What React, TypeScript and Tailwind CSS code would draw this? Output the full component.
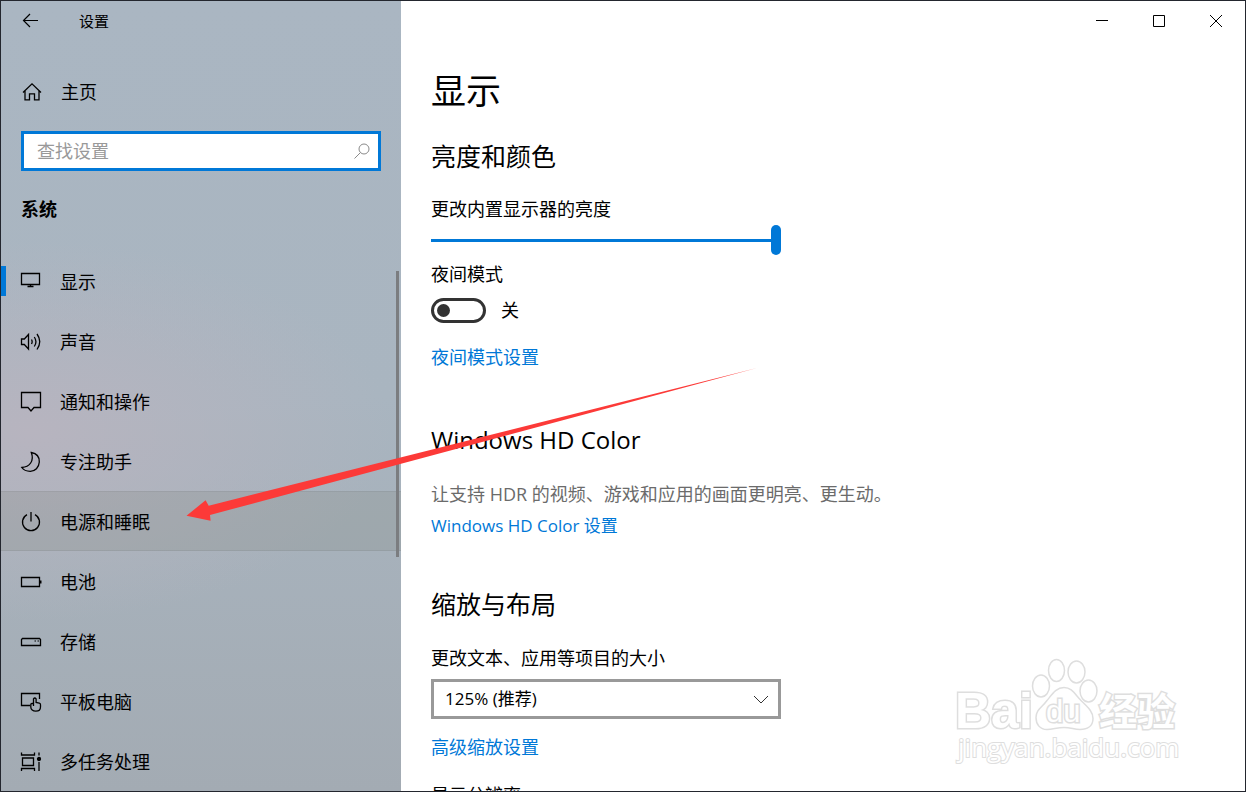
import { useState } from "react"
import type { ReactNode } from "react"
import { clsx } from "clsx"

interface NavItem {
  label: string
  icon: ReactNode
}

interface IconProps {
  children: ReactNode
}

const NavIcon = ({ children }: IconProps) => (
  <svg
    width="22"
    height="22"
    viewBox="0 0 22 22"
    fill="none"
    stroke="currentColor"
    strokeWidth="1.3"
    aria-hidden="true"
    className="shrink-0"
  >
    {children}
  </svg>
)

const NAV_ITEMS: NavItem[] = [
  {
    label: "显示",
    icon: (
      <NavIcon>
        <path d="M1.5 2.5h18v11h-18zM10.5 13.5v2.500M7.500 15.500h6" />
      </NavIcon>
    ),
  },
  {
    label: "声音",
    icon: (
      <NavIcon>
        <path d="M1.5 8h2.8L8.5 3.5v14.500L4.300 13.500H1.500z" />
        <path d="M11.500 8.500q1.300 2.200 0 4.500M14.300 6q3.300 4.800 0 9.500M17 3q5.500 7.500 0 15.500" />
      </NavIcon>
    ),
  },
  {
    label: "通知和操作",
    icon: (
      <NavIcon>
        <path d="M1.500 1.500h19v15H14l-3 3.500-3-3.500H1.500z" />
      </NavIcon>
    ),
  },
  {
    label: "专注助手",
    icon: (
      <NavIcon>
        <path d="M11.300 1.500C17 2.500 19.500 6.500 19.300 11 19 16.500 15 20.300 10.300 20.300 6.800 20.300 3.500 19 1.800 16.500 9.500 16 14.500 10 11.300 1.500z" />
      </NavIcon>
    ),
  },
  {
    label: "电源和睡眠",
    icon: (
      <NavIcon>
        <path d="M11 1v9.500M7 3.600a8.500 8.500 0 1 0 8 0" />
      </NavIcon>
    ),
  },
  {
    label: "电池",
    icon: (
      <NavIcon>
        <path d="M1.500 6.500h18v9h-18z" />
        <path d="M20.500 9.500v3" strokeWidth="2" />
      </NavIcon>
    ),
  },
  {
    label: "存储",
    icon: (
      <NavIcon>
        <path d="M2.500 7.500h17l1 1v6h-19v-6z" />
        <path d="M14.500 10h1.500M17.500 10h1.500" strokeWidth="1.200" />
      </NavIcon>
    ),
  },
  {
    label: "平板电脑",
    icon: (
      <NavIcon>
        <path d="M10 14.500H1.500v-12h18v5.500" />
        <path d="M13.500 15V7.800q1.300-1.600 2.600 0v3.700l3.200.7q1.200.3 1.200 1.600v2.200c0 2.700-1.900 4.200-4.700 4.200-3 0-5-1.600-5-4.200v-2.500q0-1 1.200-1h1.500" />
      </NavIcon>
    ),
  },
  {
    label: "多任务处理",
    icon: (
      <NavIcon>
        <path d="M2.500 7h11v7.500h-11zM1.500 1.500v2.500h13V1.500M1.500 20v-2.500h13V20M19 1.500v3M19 11v9" />
        <circle cx="19" cy="8" r="1.500" fill="currentColor" />
      </NavIcon>
    ),
  },
]

const SidebarHeader = () => (
  <>
    <div className="flex h-10 items-center">
      <button type="button" aria-label="返回" className="px-5">
        <svg width="20" height="20" viewBox="0 0 20 20" fill="none" stroke="currentColor" strokeWidth="1.2" aria-hidden="true">
          <path d="M17 9.500H2.500M9 3L2.500 9.500 9 16" />
        </svg>
      </button>
      <span className="pl-[18px] text-[15px]">设置</span>
    </div>

    <a href="#home" className="mt-6 flex h-[54px] items-center gap-[18px] px-5">
      <NavIcon>
        <path d="M2 11.500L11 2.800l9 8.700M4 9.800v9h4.500v-6h5v6H18v-9" />
      </NavIcon>
      <span>主页</span>
    </a>

    <label className="mx-5 mt-3 flex h-10 items-center border-3 border-[#0078d7] bg-white pr-[7px] pl-[13px]">
      <input
        type="text"
        aria-label="查找设置"
        placeholder="查找设置"
        className="min-w-0 flex-1 outline-none placeholder:text-[#999]"
      />
      <svg width="18" height="18" viewBox="0 0 18 18" fill="none" stroke="#8a8a8a" aria-hidden="true">
        <circle cx="11" cy="7" r="5" />
        <path d="M7.500 10.500L1.500 16.500" />
      </svg>
    </label>

    <h2 className="mt-[22px] px-5 leading-8 font-bold">系统</h2>
  </>
)

const Sidebar = () => (
  <aside className="relative w-100 shrink-0 overflow-hidden bg-[radial-gradient(ellipse_360px_190px_at_30px_430px,#b7b4bf,transparent),linear-gradient(to_bottom,#aab6c2,#a9b5c0_50%,#a3abb3)]">
    <SidebarHeader />
    <nav className="mt-[26px]">
      {NAV_ITEMS.map((item, index) => (
        <a
          key={item.label}
          href="#settings"
          aria-current={index === 0 ? "page" : undefined}
          className={clsx(
            "flex h-15 items-center",
            index === 4 && "border-y border-black/5 bg-[#80827c]/22"
          )}
        >
          <span className={clsx("h-[30px] w-[5px]", index === 0 && "bg-[#0078d7]")} />
          <span className="flex items-center gap-[18px] pt-0.5 pl-3.5">
            {item.icon}
            {item.label}
          </span>
        </a>
      ))}
    </nav>
    {/* Scrollbar thumb */}
    <div className="absolute top-[270px] right-[2px] h-[286px] w-[3px] bg-[#7b7d80]" />
  </aside>
)

const WindowControls = () => (
  <div className="flex h-10 justify-end pr-px">
    <button type="button" aria-label="最小化" className="flex w-[57px] items-center justify-center">
      <svg width="14" height="14" viewBox="0 0 14 14" stroke="#000" aria-hidden="true">
        <path d="M1 6.500h12" />
      </svg>
    </button>
    <button type="button" aria-label="最大化" className="flex w-[57px] items-center justify-center">
      <svg width="14" height="14" viewBox="0 0 14 14" fill="none" stroke="#000" aria-hidden="true">
        <path d="M1.500 1.500h11v11h-11z" />
      </svg>
    </button>
    <button type="button" aria-label="关闭" className="flex w-[57px] items-center justify-center">
      <svg width="14" height="14" viewBox="0 0 14 14" stroke="#000" aria-hidden="true">
        <path d="M1 1l12 12M13 1L1 13" />
      </svg>
    </button>
  </div>
)

const DisplaySettings = () => {
  const [brightness, setBrightness] = useState(100)
  const [nightMode, setNightMode] = useState(false)

  return (
    <div className="px-[30px]">
      <h1 className="mt-6 text-[35px] leading-[52px]">显示</h1>

      <section>
        <h2 className="mt-[19px] text-[25px] leading-10">亮度和颜色</h2>
        <label htmlFor="brightness" className="mt-[19px] block leading-7">
          更改内置显示器的亮度
        </label>
        <input
          id="brightness"
          type="range"
          min="0"
          max="100"
          value={brightness}
          onChange={(e) => setBrightness(Number(e.target.value))}
          className="mt-[2px] block h-[30px] w-[350px] appearance-none bg-transparent [&::-webkit-slider-runnable-track]:h-[3px] [&::-webkit-slider-runnable-track]:bg-[#0078d7] [&::-webkit-slider-thumb]:mt-[-14px] [&::-webkit-slider-thumb]:h-[30px] [&::-webkit-slider-thumb]:w-[10px] [&::-webkit-slider-thumb]:appearance-none [&::-webkit-slider-thumb]:rounded-full [&::-webkit-slider-thumb]:bg-[#0078d7]"
        />
        <label htmlFor="night-mode" className="mt-[5px] block leading-7">
          夜间模式
        </label>
        <div className="mt-2 flex h-7 items-center gap-[15px]">
          <input
            id="night-mode"
            type="checkbox"
            role="switch"
            checked={nightMode}
            onChange={(e) => setNightMode(e.target.checked)}
            className="flex h-[25px] w-[55px] appearance-none items-center rounded-full border-[3px] border-[#333] px-[3px] before:size-[13px] before:rounded-full before:bg-[#333] checked:justify-end"
          />
          <span>{nightMode ? "开" : "关"}</span>
        </div>
        <a href="#night-mode" className="mt-[19px] block leading-7 text-[#0078d7]">
          夜间模式设置
        </a>
      </section>

      <section>
        <h2 className="mt-[49px] text-[24px] leading-10">Windows HD Color</h2>
        <p className="mt-5 leading-7 text-[#6b6b6b]">
          让支持 HDR 的视频、游戏和应用的画面更明亮、更生动。
        </p>
        <a href="#hd-color" className="mt-1 block text-[17px] leading-7 text-[#0078d7]">
          Windows HD Color 设置
        </a>
      </section>

      <section>
        <h2 className="mt-11 text-[25px] leading-10">缩放与布局</h2>
        <label htmlFor="scale" className="mt-5 block leading-7">
          更改文本、应用等项目的大小
        </label>
        <div className="relative mt-[7px] w-[350px]">
          <select
            id="scale"
            defaultValue="125"
            className="block h-10 w-full appearance-none border-3 border-[#999] bg-white px-[11px] text-[17px]"
          >
            <option value="100">100%</option>
            <option value="125">125% (推荐)</option>
            <option value="150">150%</option>
          </select>
          <svg
            width="16"
            height="10"
            viewBox="0 0 16 10"
            fill="none"
            stroke="#333"
            aria-hidden="true"
            className="pointer-events-none absolute top-4 right-3"
          >
            <path d="M1 1l7 7 7-7" />
          </svg>
        </div>
        <a href="#scaling" className="mt-3.5 block leading-7 text-[#0078d7]">
          高级缩放设置
        </a>
        <p className="mt-5 leading-7">显示分辨率</p>
      </section>
    </div>
  )
}

const Arrow = () => (
  <svg
    width="580"
    height="160"
    viewBox="180 365 580 160"
    aria-hidden="true"
    className="pointer-events-none absolute top-[364px] left-[179px]"
  >
    <path d="M186.500 515.700L205.600 500.300 208.700 505.700 757 368 210 515 210.600 520.700z" fill="#fc3a38" />
  </svg>
)

const Watermark = () => (
  <svg
    width="240"
    height="120"
    viewBox="950 650 240 120"
    fill="#fff"
    stroke="#dedede"
    strokeWidth="1.500"
    className="pointer-events-none absolute right-[55px] bottom-[21px]"
  >
    <ellipse cx="1041" cy="686" rx="8.500" ry="11" />
    <ellipse cx="1056.500" cy="670.500" rx="8" ry="11" />
    <ellipse cx="1076.500" cy="672" rx="8.500" ry="11" />
    <ellipse cx="1088.500" cy="691" rx="8.500" ry="11" />
    <path d="M1064 687.500c8 0 11 7 17 13 7 7 12 11 12 18 0 8-6 11-13 11-6 0-9-2-16-2s-11 2-17 2c-7 0-11-5-11-12 0-8 6-10 11-17 5-6 9-13 17-13z" />
    <g fontFamily="'Liberation Sans', 'Noto Sans CJK SC', sans-serif" fontWeight="700" paintOrder="stroke">
      <text x="955" y="728" fontSize="50" strokeWidth="3">Bai</text>
      <text x="1046" y="722" fontSize="31" fontWeight="400" strokeWidth="3">du</text>
      <text x="1099" y="725" fontSize="38" strokeWidth="3">经验</text>
    </g>
    <text
      x="958"
      y="757"
      fontSize="26"
      strokeWidth="2"
      paintOrder="stroke"
      fontFamily="'Open Sans', sans-serif"
    >
      jingyan.baidu.com
    </text>
  </svg>
)

export default function App() {
  return (
    <div className="relative flex h-screen overflow-hidden border border-[#23262e] bg-white font-['Open_Sans','Noto_Sans_CJK_SC',sans-serif] text-[18px] text-black">
      <Sidebar />
      <main className="min-w-0 flex-1 overflow-hidden">
        <WindowControls />
        <DisplaySettings />
      </main>
      <Arrow />
      <Watermark />
    </div>
  )
}
